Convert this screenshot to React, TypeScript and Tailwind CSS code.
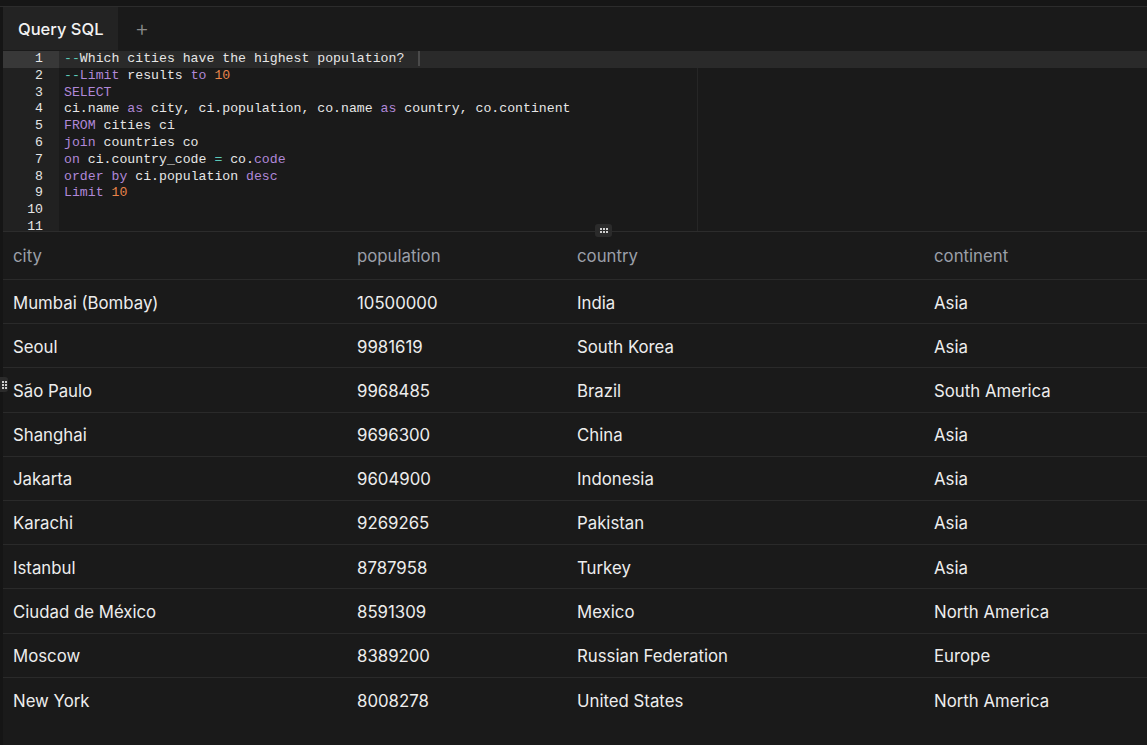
import React from "react";

const K = "text-[#b088d8]"; // keyword purple
const N = "text-[#e8834a]"; // number orange
const O = "text-[#5cc9b8]"; // operator teal
const W = "text-[#e6e6e6]";

type Tok = [string, string];
const lines: Tok[][] = [
  [["--", O], ["Which cities have the highest population?", W]],
  [["--", O], ["Limit", K], [" results ", W], ["to", K], [" ", W], ["10", N]],
  [["SELECT", K]],
  [["ci.name ", W], ["as", K], [" city, ci.population, co.name ", W], ["as", K], [" country, co.continent", W]],
  [["FROM", K], [" cities ci", W]],
  [["join", K], [" countries co", W]],
  [["on", K], [" ci.country_code ", W], ["=", O], [" co.", W], ["code", K]],
  [["order", K], [" ", W], ["by", K], [" ci.population ", W], ["desc", K]],
  [["Limit", K], [" ", W], ["10", N]],
  [],
  [],
];

const rows = [
  ["Mumbai (Bombay)", "10500000", "India", "Asia"],
  ["Seoul", "9981619", "South Korea", "Asia"],
  ["São Paulo", "9968485", "Brazil", "South America"],
  ["Shanghai", "9696300", "China", "Asia"],
  ["Jakarta", "9604900", "Indonesia", "Asia"],
  ["Karachi", "9269265", "Pakistan", "Asia"],
  ["Istanbul", "8787958", "Turkey", "Asia"],
  ["Ciudad de México", "8591309", "Mexico", "North America"],
  ["Moscow", "8389200", "Russian Federation", "Europe"],
  ["New York", "8008278", "United States", "North America"],
];

function Dots({ cols, rows: r }: { cols: number; rows: number }) {
  const items = [];
  for (let i = 0; i < cols * r; i++) items.push(<span key={i} className="w-[2px] h-[2px] bg-[#cfcfcf]" />);
  return (
    <div className={cols === 3 ? "grid grid-cols-3 gap-[1px]" : "grid grid-cols-2 gap-[1px]"}>{items}</div>
  );
}

export default function App() {
  return (
    <div
      className="w-[1147px] h-[745px] bg-[#1a1a1a] overflow-hidden relative flex flex-col"
      style={{ fontFamily: "Inter, 'Noto Sans', sans-serif" }}
    >
      <div className="h-[6px] bg-[#161616] border-b border-[#2c2c2c] shrink-0 box-content" />
      <div className="flex flex-1 min-h-0">
        <div className="w-[3px] bg-[#151515] shrink-0" />
        <div className="flex-1 flex flex-col min-w-0 relative">
          {/* tab bar */}
          <div className="h-[43px] flex items-stretch bg-[#1a1a1a] shrink-0">
            <div className="w-[115px] bg-[#232323] flex items-center pl-[15px] pt-[1px] text-[16.5px] font-medium text-[#f2f2f2]">
              Query SQL
            </div>
            <div className="w-[48px] flex items-center justify-center text-[#8a8a8a] text-[22px] font-light">
              +
            </div>
          </div>
          {/* editor */}
          <div
            className="h-[181px] flex shrink-0 relative overflow-hidden pt-[1px]"
            style={{ fontFamily: "'Liberation Mono', monospace" }}
          >
            <div className="w-[56px] bg-[#212121] flex flex-col">
              {lines.map((_, i) => (
                <div
                  key={i}
                  className={
                    "h-[16.8px] leading-[16.8px] text-[13.2px] text-right pr-[16px] text-[#e6e6e6] " +
                    (i === 0 ? "bg-[#383838]" : "")
                  }
                >
                  {i + 1}
                </div>
              ))}
            </div>
            <div className="flex-1 flex flex-col relative">
              {lines.map((l, i) => (
                <div
                  key={i}
                  className={
                    "h-[16.8px] leading-[16.8px] text-[13.2px] pl-[5px] whitespace-pre " +
                    (i === 0 ? "bg-[#2a2a2a]" : "")
                  }
                >
                  {l.map(([t, c], j) => (
                    <span key={j} className={c}>
                      {t}
                    </span>
                  ))}
                  {i === 0 && <span className="inline-block w-[2px] h-[15px] bg-[#4a4a4a] align-middle ml-[14px]" />}
                </div>
              ))}
              <div className="absolute left-[638px] top-[17px] bottom-0 w-[1px] bg-[#262626]" />
            </div>
          </div>
          {/* divider with handle */}
          <div className="h-[1px] bg-[#2c2c2c] shrink-0 relative">
            <div className="absolute left-[592px] top-[-7px] w-[17px] h-[13px] rounded-[3px] bg-[#2b2b2b] flex items-center justify-center">
              <Dots cols={3} rows={2} />
            </div>
          </div>
          {/* table */}
          <div className="flex-1 min-h-0">
            <div className="grid grid-cols-[354px_220px_357px_1fr] h-[48px] items-center pt-[2px] border-b border-[#2a2a2a] text-[16.8px] text-[#9a9fa8]">
              <div className="pl-[10px]">city</div>
              <div>population</div>
              <div>country</div>
              <div>continent</div>
            </div>
            {rows.map((r, i) => (
              <div
                key={i}
                className="grid grid-cols-[354px_220px_357px_1fr] h-[44.2px] items-center pt-[3px] border-b border-[#2a2a2a] last:border-b-0 text-[16.8px] text-[#ededed]"
              >
                <div className="pl-[10px]">{r[0]}</div>
                <div>{r[1]}</div>
                <div>{r[2]}</div>
                <div>{r[3]}</div>
              </div>
            ))}
          </div>
        </div>
        <div className="absolute left-0 top-[377px] w-[8px] h-[15px] rounded-r-[3px] bg-[#2b2b2b] flex items-center justify-center">
          <Dots cols={2} rows={3} />
        </div>
      </div>
    </div>
  );
}
